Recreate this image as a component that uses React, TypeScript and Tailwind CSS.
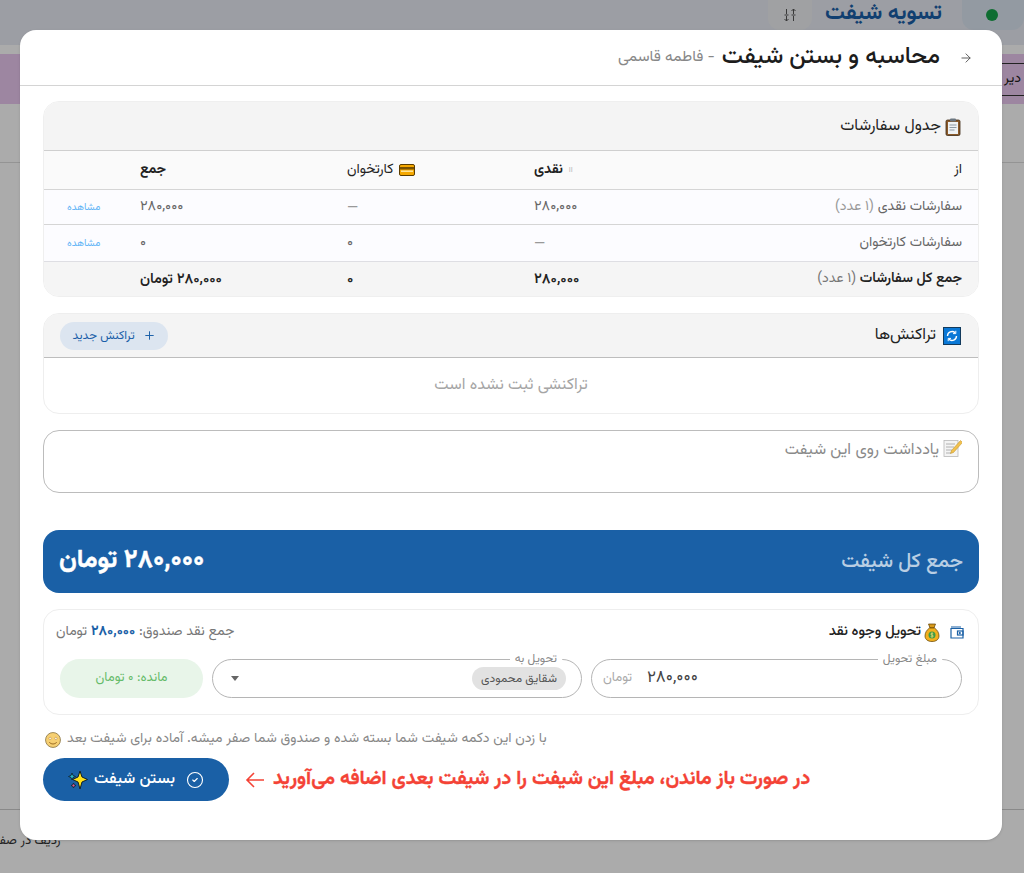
import type { ReactNode } from 'react';
import { ArrowRight, CircleCheck, Plus } from 'lucide-react';

const font = "font-['Vazirmatn','DejaVu_Sans','Noto_Sans',sans-serif]";
const rowGrid = 'grid grid-cols-[273px_187px_187px_207px_1fr] items-center';

function ClipboardIcon() {
    return (
        <svg width="16" height="18" viewBox="0 0 16 18">
            <rect x="1" y="2" width="14" height="15.5" rx="1.5" fill="#8a5a2b" stroke="#3d2a14" strokeWidth="0.8" />
            <rect x="3" y="4" width="10" height="12" fill="#eef1f3" />
            <rect x="5" y="0.5" width="6" height="3" rx="1" fill="#6b7680" />
            <path d="M4.5 7h7M4.5 9.5h7M4.5 12h5" stroke="#8d99a3" strokeWidth="1" />
        </svg>
    );
}

function CardIcon() {
    return (
        <svg width="16" height="12" viewBox="0 0 16 12">
            <rect x="0.5" y="0.5" width="15" height="11" rx="1.5" fill="#f5a800" stroke="#5c3d00" />
            <rect x="1" y="3" width="14" height="2.5" fill="#7a5200" />
            <rect x="2" y="6.5" width="12" height="1.4" fill="#ffe9a8" />
        </svg>
    );
}

function CycleIcon() {
    return (
        <svg width="18" height="18" viewBox="0 0 18 18">
            <rect x="0.5" y="0.5" width="17" height="17" fill="#0a78d6" stroke="#123a5c" />
            <path d="M4.5 9a4.5 4.5 0 0 1 7.6-3.2M13.5 9a4.5 4.5 0 0 1-7.6 3.2" fill="none" stroke="#fff" strokeWidth="1.4" />
            <path d="M12.8 3.8v2.8h-2.8M5.2 14.2v-2.8h2.8" fill="none" stroke="#fff" strokeWidth="1" />
        </svg>
    );
}

function MemoIcon() {
    return (
        <svg width="19" height="18" viewBox="0 0 19 18">
            <rect x="1" y="1.5" width="14" height="16" fill="#f4f4f4" stroke="#b8b8b8" strokeWidth="0.8" />
            <path d="M3 5h9M3 8h8M3 11h6M3 14h5" stroke="#a9a9a9" strokeWidth="0.9" />
            <path d="M17.5 1.5l-9 10-1 3 3-1 9-10z" fill="#f2c14e" stroke="#b98a1e" strokeWidth="0.5" />
        </svg>
    );
}

function MoneyBagIcon() {
    return (
        <svg width="16" height="19" viewBox="0 0 16 19">
            <path d="M4.5 1h7l-1.5 4h-4z" fill="#d89a1c" stroke="#5c3d00" strokeWidth="0.7" />
            <path d="M5.5 5h5c3 2 4.5 5 4.5 8 0 3.5-3 5.5-7 5.5S1 16.5 1 13c0-3 1.5-6 4.5-8z" fill="#f2b01e" stroke="#5c3d00" strokeWidth="0.7" />
            <circle cx="8" cy="12" r="3.5" fill="#3f9b46" />
            <path d="M9.2 10.500c-.8-.6-2.400-.4-2.400.6 0 1.300 2.500.7 2.500 2 0 1-1.700 1.100-2.600.5M8 9.500v5" fill="none" stroke="#ffe27a" strokeWidth="0.7" />
        </svg>
    );
}

function WalletIcon() {
    return (
        <svg width="14" height="13" viewBox="0 0 14 13" fill="none" stroke="#1a60a6" strokeWidth="1.2">
            <path d="M1 2.500h12v9.500H1zM1 1h10" />
            <rect x="7.500" y="5" width="5.500" height="4" />
            <circle cx="9.800" cy="7" r="0.5" fill="#1a60a6" />
        </svg>
    );
}

function SparkleIcon() {
    return (
        <svg width="20" height="20" viewBox="0 0 20 20">
            <path d="M4 3l1 2.500L7.500 6.500 5 7.500 4 10 3 7.500.5 6.500 3 5.500z" fill="#2bb7c9" stroke="#10212b" strokeWidth="0.8" />
            <path d="M5.500 13l.8 1.800 1.700.7-1.700.7-.8 1.800-.8-1.800-1.700-.7 1.700-.7z" fill="#e05a9c" stroke="#10212b" strokeWidth="0.8" />
            <path d="M12 1l2 6 5.500 2.500L14 12l-2 7-2-7-5.500-2.500L10 7z" fill="#ffe11a" stroke="#10212b" strokeWidth="1" />
        </svg>
    );
}

function SmileIcon() {
    return (
        <svg width="16" height="16" viewBox="0 0 15 15">
            <circle cx="7.500" cy="7.500" r="7" fill="#f6cf72" stroke="#8f7a4a" strokeWidth="0.8" />
            <circle cx="4.800" cy="6" r="1.100" fill="#fff" stroke="#b9832b" strokeWidth="0.5" />
            <circle cx="10.200" cy="6" r="1.100" fill="#fff" stroke="#b9832b" strokeWidth="0.5" />
            <path d="M4 9.500c1.500 2.300 5.500 2.300 7 0" fill="none" stroke="#9a6a20" strokeWidth="0.9" />
        </svg>
    );
}

function SortIcon() {
    return (
        <svg width="16" height="16" viewBox="0 0 16 16" fill="none" stroke="#555" strokeWidth="1">
            <path d="M4.500 2v5M4.500 9v5M2.500 12l2 2 2-2M2.500 8h4" />
            <path d="M11.500 14V9M11.500 7V2M9.500 4l2-2 2 2M9.500 8h4" />
        </svg>
    );
}

function OrdersTable() {
    return (
        <div className="rounded-2xl border border-[#efefef] overflow-hidden">
            <div className="h-[49px] pt-[2px] bg-[#f4f4f4] border-b border-[#cfcfcf] flex items-center px-[17px] gap-1 text-[16px] text-[#222]">
                <ClipboardIcon />
                <span>جدول سفارشات</span>
            </div>
            <div className={`${rowGrid} h-[39px] bg-[#fafafa] border-b border-[#d5d5d5] text-[14px] text-[#222]`}>
                <div className="pr-[16px]">از</div>
                <div className="pl-[16px] flex items-center justify-end gap-[6px] font-bold">
                    <span className="text-[8px] font-normal text-[#bbb]">ll</span>
                    <span>نقدی</span>
                </div>
                <div className="pl-[16px] flex items-center justify-end gap-[5px]">
                    <CardIcon />
                    <span>کارتخوان</span>
                </div>
                <div className="pl-[16px] text-left font-bold">جمع</div>
                <div />
            </div>
            <div className={`${rowGrid} h-[35px] bg-[#fcfcff] border-b border-[#d5d5d5] text-[14.5px] text-[#666]`}>
                <div className="pr-[16px] text-[14px] whitespace-nowrap">
                    سفارشات نقدی <span className="text-[#999]">(۱ عدد)</span>
                </div>
                <div className="pl-[16px] text-left">۲۸۰,۰۰۰</div>
                <div className="pl-[16px] text-left text-[#999]">—</div>
                <div className="pl-[16px] text-left">۲۸۰,۰۰۰</div>
                <div className="pl-[23px] text-left text-[10px] text-[#64b5f6]">مشاهده</div>
            </div>
            <div className={`${rowGrid} h-[37px] bg-[#fcfcff] border-b border-[#dedee3] text-[14.5px] text-[#666]`}>
                <div className="pr-[16px] text-[14px]">سفارشات کارتخوان</div>
                <div className="pl-[16px] text-left text-[#999]">—</div>
                <div className="pl-[16px] text-left">۰</div>
                <div className="pl-[16px] text-left">۰</div>
                <div className="pl-[23px] text-left text-[10px] text-[#64b5f6]">مشاهده</div>
            </div>
            <div className={`${rowGrid} h-[34px] pt-px bg-[#f5f5f5] text-[14.5px] font-semibold text-[#222]`}>
                <div className="pr-[16px] text-[14px] whitespace-nowrap">
                    جمع کل سفارشات <span className="font-normal text-[#777]">(۱ عدد)</span>
                </div>
                <div className="pl-[16px] text-left">۲۸۰,۰۰۰</div>
                <div className="pl-[16px] text-left">۰</div>
                <div className="pl-[16px] text-left">۲۸۰,۰۰۰ تومان</div>
                <div />
            </div>
        </div>
    );
}

function Outlined({ label, className, children }: { label: string; className: string; children: ReactNode }) {
    return (
        <div className={`relative h-[39px] rounded-[20px] border border-[#b5b5b5] flex items-center ${className}`}>
            <span className="absolute -top-[9px] right-[19px] bg-white px-[5px] text-[12px] text-[#888] leading-[16px]">{label}</span>
            {children}
        </div>
    );
}

function App() {
    return (
        <div dir="rtl" className={`relative w-full h-[873px] overflow-hidden bg-[#ffffff] ${font}`}>
            <div className="h-[45px] bg-[#e9ecf5] flex items-start gap-[20px]">
                <div className="w-[62px] h-[30px] rounded-b-xl bg-[#dce6f2] flex items-center pr-[26px]">
                    <span className="w-[12px] h-[12px] rounded-full bg-[#16a34a]" />
                </div>
                <div className="text-[22px] leading-[28px] font-bold text-[#1a5fa8]">تسویه شیفت</div>
                <div className="-mr-[7px] w-[44px] h-[30px] rounded-b-xl bg-[#eff1f4] flex items-center justify-center">
                    <SortIcon />
                </div>
            </div>
            <div className="h-[9px] bg-white" />
            <div className="h-[50px] bg-[#ebc8f0] flex items-center text-[14px] text-[#222]">
                <div className="h-[33px] w-[60px] border-y border-[#333] flex items-center justify-end pl-[40px] whitespace-nowrap">دیر</div>
            </div>
            <div className="h-[59px] border-b border-[#ddd]" />
            <div className="h-[647px] border-b border-[#ccc]" />
            <div className="flex justify-end -ml-[16px] pt-[22px] text-[13px] text-[#333]">ردیف در صفحه</div>

            <div className="absolute inset-0 bg-black/33" />

            <div className="absolute left-[20px] top-[30px] w-[982px] h-[810px] bg-white rounded-2xl shadow-sm overflow-hidden">
                <div className="h-[56px] border-b border-[#d4d4d4] flex items-center pr-[29px] gap-[19px]">
                    <ArrowRight size={14} strokeWidth={1.6} className="text-[#555]" />
                    <span className="text-[23.7px] font-medium text-[#1c1c1c]">محاسبه و بستن شیفت</span>
                    <span className="text-[15.6px] text-[#888] -mr-[12px]">- فاطمه قاسمی</span>
                </div>

                <div className="px-[23px] pt-[15px]">
                    <OrdersTable />

                    <div className="mt-[16px] rounded-2xl border border-[#eeeeee] overflow-hidden">
                        <div className="h-[44px] bg-[#f4f4f4] border-b border-[#bdbdbd] flex items-center justify-between pr-[17px] pl-[16px]">
                            <div className="flex items-center gap-[7px] text-[16px] text-[#222]">
                                <CycleIcon />
                                <span>تراکنش‌ها</span>
                            </div>
                            <button className="h-[28px] w-[108px] rounded-full bg-[#dce5f0] text-[#1a5fa8] text-[12px] flex items-center justify-center gap-2">
                                <Plus size={13} strokeWidth={1.8} />
                                <span>تراکنش جدید</span>
                            </button>
                        </div>
                        <div className="h-[55px] flex items-center justify-center text-[16px] text-[#a5a5a5]">تراکنشی ثبت نشده است</div>
                    </div>

                    <div className="mt-[16px] h-[63px] rounded-2xl border border-[#bcbcbc] pr-[16px] pt-[8px] flex items-start gap-1 text-[16px] text-[#8a8a8a]">
                        <MemoIcon />
                        <span>یادداشت روی این شیفت</span>
                    </div>

                    <div className="mt-[37px] h-[63px] rounded-2xl bg-[#1a60a6] flex items-center justify-between px-[16px]">
                        <span className="text-[20px] font-medium text-[#b9cee3]">جمع کل شیفت</span>
                        <span className="text-[25.5px] font-bold text-white [-webkit-text-stroke:0.4px_#fff]">۲۸۰,۰۰۰ تومان</span>
                    </div>

                    <div className="mt-[16px] h-[106px] rounded-2xl border border-[#eeeeee] px-[16px] pt-[10px]">
                        <div className="flex items-center justify-between h-[24px] -mr-[2px] -ml-[4px]">
                            <div className="flex items-center gap-[3px] text-[14.5px] font-medium text-[#222]">
                                <WalletIcon />
                                <span className="mr-[7px]"><MoneyBagIcon /></span>
                                <span>تحویل وجوه نقد</span>
                            </div>
                            <div className="text-[14px] text-[#777]">
                                جمع نقد صندوق: <span className="font-bold text-[#1a60a6]">۲۸۰,۰۰۰</span> تومان
                            </div>
                        </div>
                        <div className="mt-[15px] flex gap-[9px]">
                            <Outlined label="مبلغ تحویل" className="w-[371px] justify-end pl-[11px] gap-[15px]">
                                <span className="text-[17px] text-[#444]">۲۸۰,۰۰۰</span>
                                <span className="text-[13px] text-[#aaa] whitespace-nowrap">تومان</span>
                            </Outlined>
                            <Outlined label="تحویل به" className="w-[370px] justify-between pr-[15px] pl-[18px]">
                                <span className="h-[23px] w-[94px] rounded-full bg-[#e2e2e2] text-[12px] text-[#555] whitespace-nowrap flex items-center justify-center">شقایق محمودی</span>
                                <span className="w-0 h-0 border-x-[4px] border-x-transparent border-t-[5px] border-t-[#666]" />
                            </Outlined>
                            <div className="w-[143px] h-[39px] rounded-[20px] bg-[#e8f5e9] text-[#66bb6a] text-[13px] flex items-center justify-center">مانده: ۰ تومان</div>
                        </div>
                    </div>

                    <div className="mt-[14px] flex items-center justify-end gap-[6px] text-[14px] text-[#888] pl-[2px]">
                        <span>با زدن این دکمه شیفت شما بسته شده و صندوق شما صفر میشه. آماده برای شیفت بعد</span>
                        <SmileIcon />
                    </div>

                    <div className="mt-[8px] flex items-center justify-end">
                        <span className="text-[19.6px] font-bold text-[#f44336] whitespace-nowrap [-webkit-text-stroke:0.3px_#f44336]">در صورت باز ماندن، مبلغ این شیفت را در شیفت بعدی اضافه می‌آورید</span>
                        <svg width="20" height="18" viewBox="0 0 20 18" className="mr-[8px] ml-[16px]">
                            <path d="M19 9H2M9 2L2 9l7 7" fill="none" stroke="#f44336" strokeWidth="1.6" />
                        </svg>
                        <button className="h-[43px] w-[186px] rounded-full bg-[#1a60a6] text-white text-[16px] font-medium flex items-center justify-center gap-[6px]">
                            <CircleCheck size={18} strokeWidth={1.5} className="ml-[5px]" />
                            <span>بستن شیفت</span>
                            <SparkleIcon />
                        </button>
                    </div>
                </div>
            </div>
        </div>
    );
}

export default App;
